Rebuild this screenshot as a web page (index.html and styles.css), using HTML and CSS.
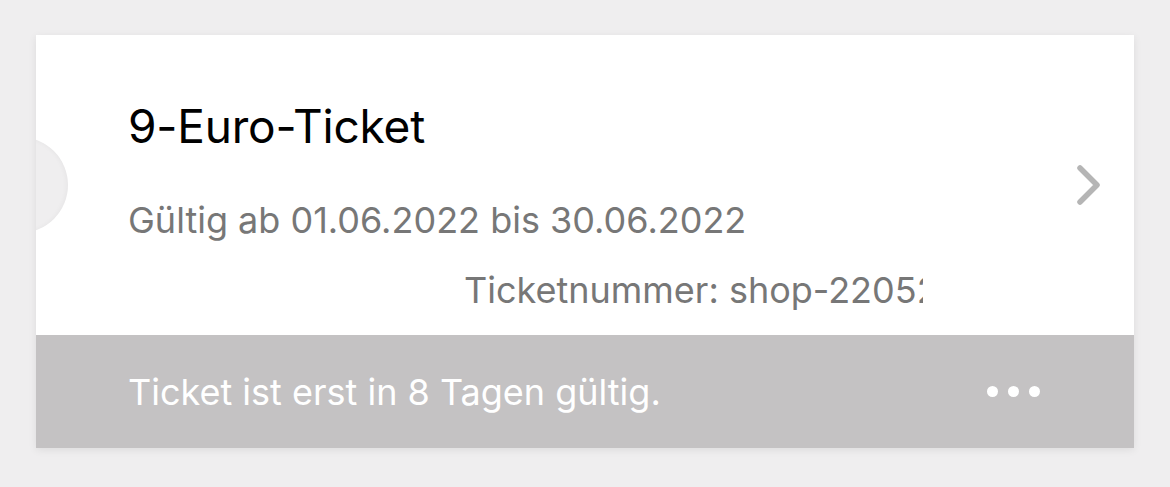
FILE: index.html
```html
<!DOCTYPE html>
<html lang="de">
<head>
<meta charset="utf-8">
<link rel="stylesheet" href="styles.css">
</head>
<body>
<div class="card">
  <div class="top">
    <div class="notch"></div>
    <div class="info">
      <div class="title">9-Euro-Ticket</div>
      <div class="validity">Gültig ab 01.06.2022 bis 30.06.2022</div>
      <div class="number-row"><span class="number">Ticketnummer: shop-22052</span></div>
    </div>
    <svg class="chevron" width="30" height="40" viewBox="0 0 30 40"><path d="M4 3 L21 20 L4 37" fill="none" stroke="#b5b5b5" stroke-width="5.5" stroke-linecap="round" stroke-linejoin="round"/></svg>
  </div>
  <div class="footer">
    <span class="status">Ticket ist erst in 8 Tagen gültig.</span>
    <div class="dots"><span></span><span></span><span></span></div>
  </div>
</div>
</body>
</html>
```
FILE: styles.css
```css
html, body { margin: 0; padding: 0; }
body {
  background: #efeeef;
  font-family: "Inter", "Roboto", "Liberation Sans", sans-serif;
  padding: 35px 36px;
  height: 487px;
  box-sizing: border-box;
}
.card {
  width: 1098px;
  background: #fff;
  box-shadow: 0 2px 8px rgba(0,0,0,0.08);
}
.top {
  position: relative;
  height: 300px;
  display: flex;
  align-items: center;
  overflow: hidden;
}
.notch {
  position: absolute;
  left: -64px;
  top: 102px;
  width: 96px;
  height: 96px;
  border-radius: 50%;
  background: #efeeef;
  box-shadow: inset -2px 0 4px rgba(0,0,0,0.03);
}
.info {
  flex: 1;
  padding-left: 92px;
  align-self: stretch;
  display: flex;
  flex-direction: column;
}
.title {
  margin-top: 63px;
  font-size: 46px;
  line-height: 56px;
  color: #000;
  letter-spacing: -0.2px;
}
.validity {
  margin-top: 44px;
  font-size: 36px;
  line-height: 44px;
  color: #777777;
  letter-spacing: 0;
}
.number-row {
  margin-top: 26px;
  padding-left: 336px;
}
.number {
  display: inline-block;
  width: 459px;
  overflow: hidden;
  white-space: nowrap;
  font-size: 36px;
  line-height: 44px;
  color: #777777;
  letter-spacing: 0;
}
.chevron {
  margin-right: 28px;
  flex: none;
}
.footer {
  height: 113px;
  background: #c4c2c3;
  display: flex;
  align-items: center;
  padding: 0 92px;
  justify-content: space-between;
}
.status {
  font-size: 36px;
  color: #fff;
  letter-spacing: 0;
}
.dots {
  display: flex;
  gap: 10px;
  margin-right: 2px;
}
.dots span {
  width: 11px;
  height: 11px;
  border-radius: 50%;
  background: #fff;
}
```
